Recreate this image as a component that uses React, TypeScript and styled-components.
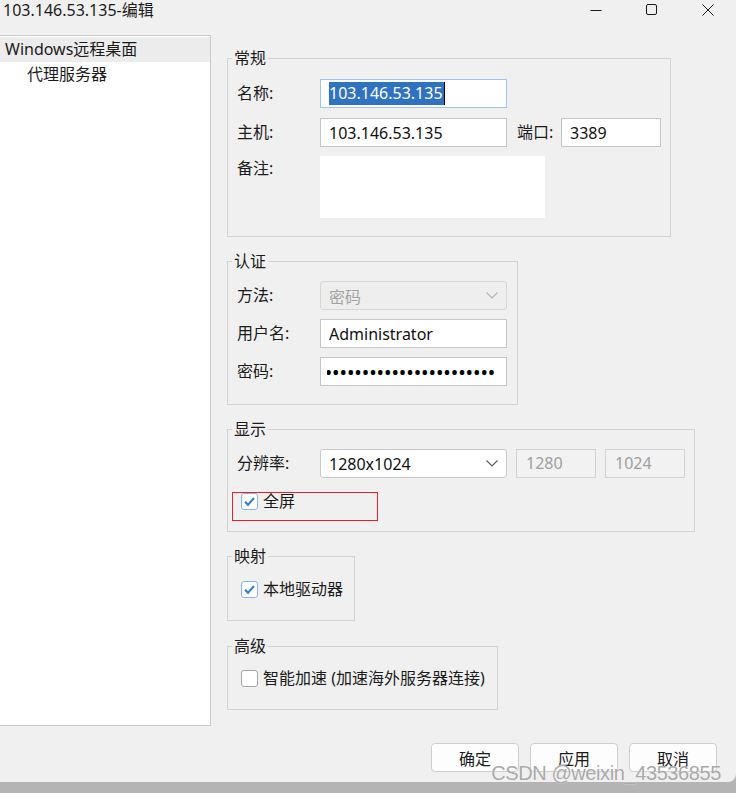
import React from 'react';
import styled, { createGlobalStyle } from 'styled-components';

const GlobalStyle = createGlobalStyle`
  html, body {
    margin: 0;
    padding: 0;
  }
  body {
    background: #b4b4b4;
    font-family: "Noto Sans", "Noto Sans CJK SC", sans-serif;
    font-size: 16px;
    color: #1b1b1b;
  }
`;

export default function App() {
  return (
    <Page>
      <GlobalStyle />
      <Window>
        <TitleBar>
          <Title>103.146.53.135-编辑</Title>
          <Controls>
            <ControlButton>
              <svg width="12" height="12" viewBox="0 0 12 12">
                <line x1="0.5" y1="6.5" x2="11.5" y2="6.5" stroke="#1b1b1b" />
              </svg>
            </ControlButton>
            <ControlButton>
              <svg width="12" height="12" viewBox="0 0 12 12">
                <rect x="0.5" y="0.5" width="10" height="10" rx="1.5" fill="none" stroke="#1b1b1b" />
              </svg>
            </ControlButton>
            <ControlButton>
              <svg width="12" height="12" viewBox="0 0 12 12">
                <path d="M0.5 0.5 L11.5 11.5 M11.5 0.5 L0.5 11.5" stroke="#1b1b1b" />
              </svg>
            </ControlButton>
          </Controls>
        </TitleBar>

        <Body>
          <Tree>
            <TreeItem $selected $indent={5}>Windows远程桌面</TreeItem>
            <TreeItem $indent={27}>代理服务器</TreeItem>
          </Tree>

          <Content>
            <Group $width={444}>
              <Legend>常规</Legend>
              <GroupBody $pt={11} $pb={18}>
                <Row>
                  <Label>名称:</Label>
                  <NameBox>
                    <Selection>103.146.53.135</Selection>
                    <Caret />
                  </NameBox>
                </Row>
                <Row $mt={10}>
                  <Label>主机:</Label>
                  <TextInput $w={187} readOnly value="103.146.53.135" />
                  <PortLabel>端口:</PortLabel>
                  <TextInput $w={100} readOnly value="3389" />
                </Row>
                <Row $mt={9} $top>
                  <Label $top>备注:</Label>
                  <Notes />
                </Row>
              </GroupBody>
            </Group>

            <Group $width={291}>
              <Legend>认证</Legend>
              <GroupBody $pt={10} $pb={18}>
                <Row>
                  <Label>方法:</Label>
                  <Select $disabled>
                    <span>密码</span>
                    <Chevron color="#b4b4b4" />
                  </Select>
                </Row>
                <Row $mt={9}>
                  <Label>用户名:</Label>
                  <TextInput $w={187} readOnly value="Administrator" />
                </Row>
                <Row $mt={9}>
                  <Label>密码:</Label>
                  <PasswordBox>
                    <Dots>
                      <span>{'•'.repeat(24)}</span>
                    </Dots>
                  </PasswordBox>
                </Row>
              </GroupBody>
            </Group>

            <Group $width={468}>
              <Legend>显示</Legend>
              <GroupBody $pt={10} $pb={19}>
                <Row>
                  <Label>分辨率:</Label>
                  <Select>
                    <span>1280x1024</span>
                    <Chevron color="#5a5a5a" />
                  </Select>
                  <DisabledBox $ml={9}>1280</DisabledBox>
                  <DisabledBox $ml={9}>1024</DisabledBox>
                </Row>
                <CheckRow $mt={12}>
                  <CheckBox checked />
                  <span>全屏</span>
                  <Annotation />
                </CheckRow>
              </GroupBody>
            </Group>

            <Group $width={128}>
              <Legend>映射</Legend>
              <GroupBody $pt={12} $pb={20}>
                <CheckRow>
                  <CheckBox checked />
                  <span>本地驱动器</span>
                </CheckRow>
              </GroupBody>
            </Group>

            <Group $width={271} $mt={1}>
              <Legend>高级</Legend>
              <GroupBody $pt={11} $pb={20}>
                <CheckRow>
                  <CheckBox />
                  <span>智能加速 (加速海外服务器连接)</span>
                </CheckRow>
              </GroupBody>
            </Group>
          </Content>
        </Body>

        <Footer>
          <Button>确定</Button>
          <Button>应用</Button>
          <Button>取消</Button>
        </Footer>

        <Watermark>CSDN @weixin_43536855</Watermark>
      </Window>
    </Page>
  );
}

function CheckBox({ checked }: { checked?: boolean }) {
  return (
    <Box $checked={checked}>
      {checked && (
        <svg width="13" height="13" viewBox="0 0 13 13">
          <path d="M2 6.8 L5 9.8 L11 3" fill="none" stroke="#2b7bd6" strokeWidth="2" />
        </svg>
      )}
    </Box>
  );
}

function Chevron({ color }: { color: string }) {
  return (
    <svg width="12" height="7" viewBox="0 0 12 7">
      <path d="M0.5 0.5 L6 6 L11.5 0.5" fill="none" stroke={color} strokeWidth="1.1" />
    </svg>
  );
}

const Page = styled.div`
  width: 736px;
  height: 793px;
  overflow: hidden;
  background: #b4b4b4;
`;

const Window = styled.div`
  position: relative;
  width: 736px;
  height: 782px;
  background: #f0f0f0;
  border-bottom-right-radius: 8px;
  display: flex;
  flex-direction: column;
`;

const TitleBar = styled.div`
  height: 35px;
  display: flex;
  justify-content: space-between;
  align-items: flex-start;
`;

const Title = styled.div`
  padding-left: 3px;
  line-height: 20px;
  font-size: 16px;
`;

const Controls = styled.div`
  display: flex;
`;

const ControlButton = styled.div`
  width: 56px;
  height: 20px;
  display: flex;
  align-items: center;
  justify-content: center;
`;

const Body = styled.div`
  display: flex;
  height: 691px;
`;

const Tree = styled.div`
  box-sizing: border-box;
  width: 211px;
  height: 691px;
  flex-shrink: 0;
  background: #fff;
  border: 1px solid #c9c9c9;
  border-left: none;
  padding-top: 1px;
`;

const TreeItem = styled.div<{ $selected?: boolean; $indent: number }>`
  height: 25px;
  line-height: 25px;
  padding-left: ${p => p.$indent}px;
  background: ${p => (p.$selected ? '#ececec' : 'transparent')};
  white-space: nowrap;
`;

const Content = styled.div`
  display: flex;
  flex-direction: column;
  align-items: flex-start;
  gap: 14px;
  padding: 13px 0 0 16px;
`;

const Group = styled.fieldset<{ $width: number; $mt?: number }>`
  box-sizing: border-box;
  width: ${p => p.$width}px;
  min-width: 0;
  margin: ${p => p.$mt ?? 0}px 0 0;
  padding: 0;
  border: 1px solid #d2d2d2;
`;

const Legend = styled.legend`
  margin-left: 4px;
  padding: 0 2px;
  line-height: 20px;
  font-size: 16px;
`;

const GroupBody = styled.div<{ $pt: number; $pb: number }>`
  display: flex;
  flex-direction: column;
  padding: ${p => p.$pt}px 9px ${p => p.$pb}px;
`;

const Row = styled.div<{ $mt?: number; $top?: boolean }>`
  display: flex;
  align-items: ${p => (p.$top ? 'flex-start' : 'center')};
  margin-top: ${p => p.$mt ?? 0}px;
`;

const Label = styled.div<{ $top?: boolean }>`
  width: 83px;
  flex-shrink: 0;
  line-height: ${p => (p.$top ? '22px' : '29px')};
  padding-top: ${p => (p.$top ? 1 : 0)}px;
  white-space: nowrap;
`;

const PortLabel = styled.div`
  width: 44px;
  margin-left: 10px;
  line-height: 29px;
`;

const TextInput = styled.input<{ $w: number }>`
  box-sizing: border-box;
  width: ${p => p.$w}px;
  height: 29px;
  margin: 0;
  padding: 0 8px;
  border: 1px solid #c6c6c6;
  border-radius: 0;
  background: #fff;
  font: inherit;
  color: #111;
  outline: none;
`;

const NameBox = styled.div`
  box-sizing: border-box;
  width: 187px;
  height: 29px;
  padding: 0 8px;
  border: 1px solid #a0c4ec;
  background: #fff;
  display: flex;
  align-items: center;
`;

const Selection = styled.span`
  background: #2f72c1;
  color: #fff;
  line-height: 23px;
  padding: 0 1px 0 0;
`;

const Caret = styled.span`
  width: 1px;
  height: 23px;
  background: #000;
`;

const Notes = styled.div`
  width: 225px;
  height: 62px;
  background: #fff;
`;

const Select = styled.div<{ $disabled?: boolean }>`
  box-sizing: border-box;
  width: 187px;
  height: 29px;
  padding: 0 8px;
  display: flex;
  align-items: center;
  justify-content: space-between;
  border: 1px solid ${p => (p.$disabled ? '#d6d6d6' : '#c9c9c9')};
  border-radius: 3px;
  background: ${p => (p.$disabled ? '#eeeeee' : '#ffffff')};
  color: ${p => (p.$disabled ? '#a2a2a2' : '#111')};
`;

const PasswordBox = styled.div`
  box-sizing: border-box;
  width: 187px;
  height: 29px;
  padding: 0 10px 0 6px;
  border: 1px solid #c6c6c6;
  background: #fff;
  display: flex;
  align-items: center;
`;

const Dots = styled.div`
  flex: 1;
  display: flex;
  justify-content: flex-end;
  overflow: hidden;
  font-size: 16px;
  font-weight: 700;
  letter-spacing: 1.4px;
  color: #000;

  span {
    flex-shrink: 0;
    white-space: nowrap;
  }
`;

const DisabledBox = styled.div<{ $ml: number }>`
  box-sizing: border-box;
  width: 80px;
  height: 29px;
  margin-left: ${p => p.$ml}px;
  padding: 0 9px;
  line-height: 27px;
  border: 1px solid #d3d3d3;
  background: #f2f2f2;
  color: #9f9f9f;
`;

const CheckRow = styled.div<{ $mt?: number }>`
  position: relative;
  display: flex;
  align-items: center;
  gap: 5px;
  padding-left: 4px;
  line-height: 22px;
  margin-top: ${p => p.$mt ?? 0}px;
  white-space: nowrap;
`;

const Box = styled.span<{ $checked?: boolean }>`
  box-sizing: border-box;
  width: 17px;
  height: 17px;
  flex-shrink: 0;
  display: inline-flex;
  align-items: center;
  justify-content: center;
  border: ${p => (p.$checked ? '1.5px solid #86b6ea' : '1px solid #a4a4a4')};
  border-radius: 3px;
  background: #fff;
`;

const Annotation = styled.div`
  position: absolute;
  left: -5px;
  top: 2px;
  width: 146px;
  height: 29px;
  box-sizing: border-box;
  border: 1.5px solid #e3212b;
  pointer-events: none;
`;

const Footer = styled.div`
  display: flex;
  justify-content: flex-end;
  gap: 11px;
  padding: 17px 19px 0 0;
`;

const Button = styled.button`
  box-sizing: border-box;
  width: 88px;
  height: 29px;
  margin: 0;
  padding: 0;
  border: 1px solid #cfcfcf;
  border-radius: 4px;
  background: #fdfdfd;
  font: inherit;
  color: #1b1b1b;
`;

const Watermark = styled.div`
  position: absolute;
  right: 15px;
  top: 762px;
  font-family: "Liberation Sans", Arial, sans-serif;
  font-size: 20px;
  line-height: 22px;
  letter-spacing: -0.4px;
  color: #a9a9a9;
  text-shadow: 0 0 1px #ffffff;
  white-space: nowrap;
  pointer-events: none;
`;
